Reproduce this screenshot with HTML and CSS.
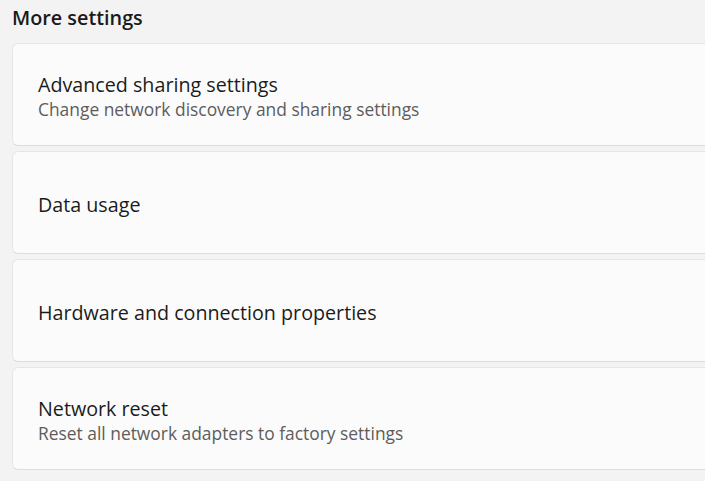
FILE: index.html
```html
<!DOCTYPE html>
<html>
<head>
<meta charset="utf-8">
<link rel="stylesheet" href="styles.css">
</head>
<body>
<div class="page">
  <h2 class="section-title">More settings</h2>
  <div class="list">
    <div class="card">
      <div class="card-title">Advanced sharing settings</div>
      <div class="card-sub">Change network discovery and sharing settings</div>
    </div>
    <div class="card">
      <div class="card-title">Data usage</div>
    </div>
    <div class="card">
      <div class="card-title">Hardware and connection properties</div>
    </div>
    <div class="card">
      <div class="card-title">Network reset</div>
      <div class="card-sub">Reset all network adapters to factory settings</div>
    </div>
  </div>
</div>
</body>
</html>
```
FILE: styles.css
```css
html, body {
  margin: 0;
  padding: 0;
  background: #f3f3f3;
  overflow: hidden;
}
body {
  font-family: "Open Sans", "Noto Sans", "DejaVu Sans", sans-serif;
  color: #1b1b1b;
}
.page {
  padding: 0 0 0 12px;
}
.section-title {
  margin: 0;
  height: 43px;
  padding-top: 4px;
  box-sizing: border-box;
  font-size: 19.8px;
  font-weight: 600;
  line-height: 28px;
  color: #1a1a1a;
}
.list {
  display: flex;
  flex-direction: column;
  gap: 5px;
}
.card {
  height: 103px;
  box-sizing: border-box;
  background: #fbfbfb;
  border: 1px solid #e6e6e6;
  border-right: none;
  border-bottom-color: #dcdcdc;
  border-radius: 6px 0 0 6px;
  padding: 4px 0 0 25px;
  display: flex;
  flex-direction: column;
  justify-content: center;
}
.card-title {
  font-size: 19.7px;
  line-height: 25px;
  color: #1b1b1b;
}
.card-sub {
  font-size: 17.4px;
  line-height: 24px;
  color: #5d5d5d;
}
```
